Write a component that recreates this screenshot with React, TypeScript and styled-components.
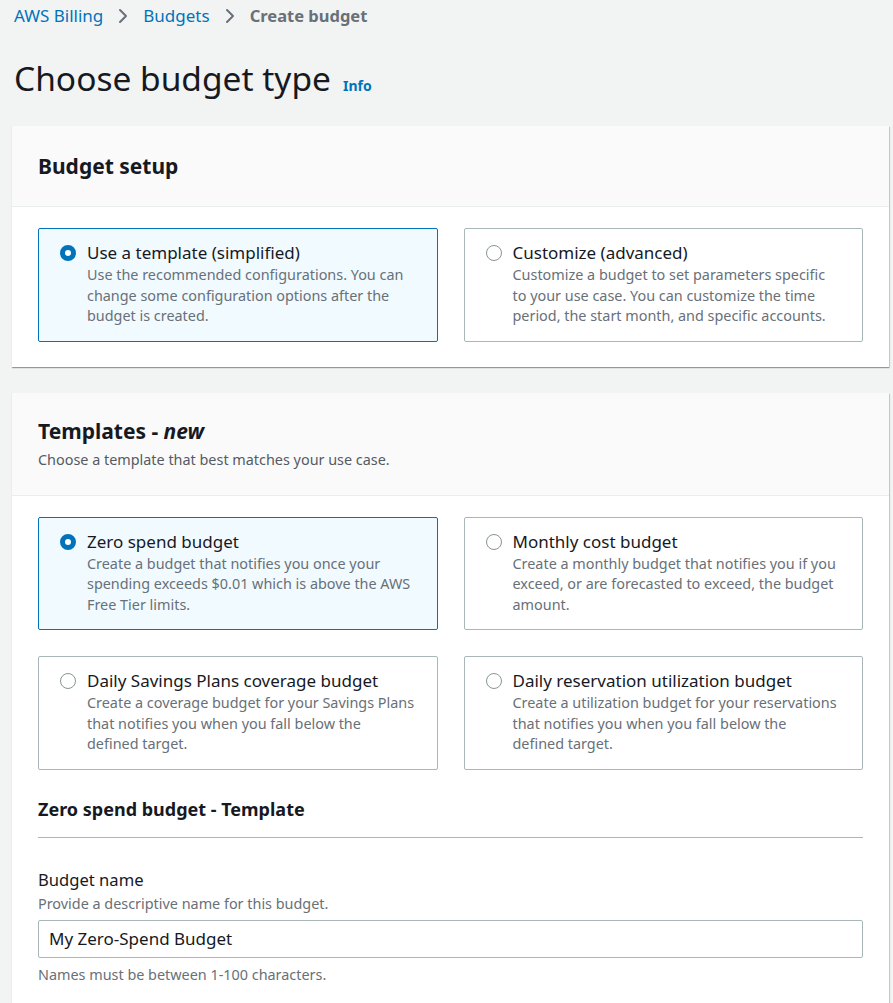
import React, { useState } from 'react';
import styled, { createGlobalStyle } from 'styled-components';

const GlobalStyle = createGlobalStyle`
	body {
		margin: 0;
		background: #f2f3f3;
		font-family: 'Noto Sans', 'Open Sans', Arial, sans-serif;
		color: #16191f;
	}
`;

const Page = styled.div`
	padding: 6px 4px 0 12px;
`;

const Breadcrumbs = styled.nav`
	display: flex;
	align-items: center;
	gap: 15px;
	padding-left: 2px;
	font-size: 17px;
	line-height: 20px;
`;

const Crumb = styled.span<{ $current?: boolean }>`
	color: ${(p) => (p.$current ? '#687078' : '#0073bb')};
	font-weight: ${(p) => (p.$current ? 700 : 400)};
	font-size: ${(p) => (p.$current ? '16.5px' : 'inherit')};
`;

const TitleRow = styled.div`
	display: flex;
	align-items: baseline;
	gap: 12px;
	padding: 30px 0 0 2px;
	margin-bottom: 26px;
`;

const Title = styled.h1`
	margin: 0;
	font-size: 33.5px;
	font-weight: 400;
	line-height: 44px;
	color: #16191f;
`;

const InfoLink = styled.span`
	color: #0073bb;
	font-size: 14px;
	font-weight: 700;
`;

const Card = styled.section`
	background: #ffffff;
	box-shadow: -1px 0 0 0 #eaeded, 0 1px 1px 0 rgba(0, 28, 36, 0.3),
		1px 1px 1px 0 rgba(0, 28, 36, 0.15);
	margin-bottom: 26px;
`;

const CardHeader = styled.header<{ $tall?: boolean }>`
	background: #fafafa;
	border-bottom: 1px solid #eaeded;
	padding: ${(p) => (p.$tall ? '26px 26px 25px' : '28px 26px 28px')};
`;

const CardTitle = styled.h2`
	margin: 0;
	font-size: 21px;
	line-height: 24px;
	font-weight: 700;
	em {
		font-style: italic;
	}
`;

const CardSubtitle = styled.p`
	margin: 7px 0 0;
	font-size: 14.4px;
	line-height: 20px;
	color: #545b64;
`;

const CardBody = styled.div`
	padding: 21px 26px 25px;
`;

const TileGrid = styled.div`
	display: grid;
	grid-template-columns: 1fr 1fr;
	gap: 26px;
`;

const Tile = styled.label<{ $selected: boolean }>`
	display: flex;
	gap: 11px;
	padding: 12px 20px 14px 21px;
	border: 1px solid ${(p) => (p.$selected ? '#0073bb' : '#aab7b8')};
	background: ${(p) => (p.$selected ? '#f1faff' : '#ffffff')};
	border-radius: 2px;
	cursor: pointer;
`;

const Radio = styled.span<{ $checked: boolean }>`
	flex: none;
	box-sizing: border-box;
	width: 16px;
	height: 16px;
	margin-top: 4px;
	border-radius: 50%;
	border: ${(p) => (p.$checked ? '5px solid #0073bb' : '1.5px solid #879596')};
	background: #ffffff;
`;

const TileText = styled.div`
	display: flex;
	flex-direction: column;
`;

const TileTitle = styled.span`
	font-size: 17px;
	line-height: 23px;
	color: #16191f;
`;

const TileDesc = styled.span`
	font-size: 14.4px;
	line-height: 20.5px;
	color: #687078;
	margin-top: 1px;
`;

const SubHeading = styled.h3`
	margin: 28px 0 0;
	padding-bottom: 17px;
	border-bottom: 1px solid #aab7b8;
	font-size: 18px;
	line-height: 22px;
	font-weight: 700;
`;

const Field = styled.div`
	display: flex;
	flex-direction: column;
	padding-top: 31px;
`;

const FieldLabel = styled.span`
	font-size: 16.6px;
	line-height: 22px;
`;

const FieldHint = styled.span<{ $after?: boolean }>`
	font-size: 14.4px;
	line-height: 20px;
	color: #687078;
	margin-top: ${(p) => (p.$after ? '7px' : '3px')};
`;

const TextInput = styled.input`
	box-sizing: border-box;
	margin-top: 6px;
	height: 38px;
	width: 100%;
	padding: 0 10px;
	border: 1px solid #aab7b8;
	border-radius: 2px;
	font-family: inherit;
	font-size: 17px;
	color: #16191f;
	outline: none;
`;

function Chevron() {
	return (
		<svg width="10" height="16" viewBox="0 0 10 16" fill="none">
			<polyline
				points="2,2 8,8 2,14"
				stroke="#687078"
				strokeWidth="2"
				strokeLinecap="round"
				strokeLinejoin="round"
			/>
		</svg>
	);
}

interface Option {
	id: string;
	title: string;
	desc: string;
}

// non-breaking spaces keep the line breaks where the console puts them
const setupOptions: Option[] = [
	{
		id: 'template',
		title: 'Use a template (simplified)',
		desc: 'Use the recommended configurations. You can change some configuration options after the budget is created.',
	},
	{
		id: 'custom',
		title: 'Customize (advanced)',
		desc: 'Customize a budget to set parameters specific to\u00a0your use case. You can customize the time period, the start month, and specific accounts.',
	},
];

const templateOptions: Option[] = [
	{
		id: 'zero',
		title: 'Zero spend budget',
		desc: 'Create a budget that notifies you once your spending exceeds $0.01 which is above the AWS Free Tier limits.',
	},
	{
		id: 'monthly',
		title: 'Monthly cost budget',
		desc: 'Create a monthly budget that notifies you if you exceed, or are forecasted to exceed, the budget amount.',
	},
	{
		id: 'savings',
		title: 'Daily Savings Plans coverage budget',
		desc: 'Create a coverage budget for your Savings Plans that notifies you when you fall below the defined\u00a0target.',
	},
	{
		id: 'reservation',
		title: 'Daily reservation utilization budget',
		desc: 'Create a utilization budget for your reservations that notifies you when you fall below the defined\u00a0target.',
	},
];

function Tiles({
	options,
	value,
	onChange,
}: {
	options: Option[];
	value: string;
	onChange: (id: string) => void;
}) {
	return (
		<TileGrid>
			{options.map((o) => (
				<Tile key={o.id} $selected={value === o.id} onClick={() => onChange(o.id)}>
					<Radio $checked={value === o.id} />
					<TileText>
						<TileTitle>{o.title}</TileTitle>
						<TileDesc>{o.desc}</TileDesc>
					</TileText>
				</Tile>
			))}
		</TileGrid>
	);
}

export default function App() {
	const [setup, setSetup] = useState('template');
	const [template, setTemplate] = useState('zero');
	const [name, setName] = useState('My Zero-Spend Budget');

	return (
		<>
			<GlobalStyle />
			<Page>
				<Breadcrumbs>
					<Crumb>AWS Billing</Crumb>
					<Chevron />
					<Crumb>Budgets</Crumb>
					<Chevron />
					<Crumb $current>Create budget</Crumb>
				</Breadcrumbs>
				<TitleRow>
					<Title>Choose budget type</Title>
					<InfoLink>Info</InfoLink>
				</TitleRow>

				<Card>
					<CardHeader>
						<CardTitle>Budget setup</CardTitle>
					</CardHeader>
					<CardBody>
						<Tiles options={setupOptions} value={setup} onChange={setSetup} />
					</CardBody>
				</Card>

				<Card>
					<CardHeader $tall>
						<CardTitle>
							Templates - <em>new</em>
						</CardTitle>
						<CardSubtitle>Choose a template that best matches your use case.</CardSubtitle>
					</CardHeader>
					<CardBody>
						<Tiles options={templateOptions} value={template} onChange={setTemplate} />
						<SubHeading>Zero spend budget - Template</SubHeading>
						<Field>
							<FieldLabel>Budget name</FieldLabel>
							<FieldHint>Provide a descriptive name for this budget.</FieldHint>
							<TextInput value={name} onChange={(e) => setName(e.target.value)} />
							<FieldHint $after>Names must be between 1-100 characters.</FieldHint>
						</Field>
					</CardBody>
				</Card>
			</Page>
		</>
	);
}
